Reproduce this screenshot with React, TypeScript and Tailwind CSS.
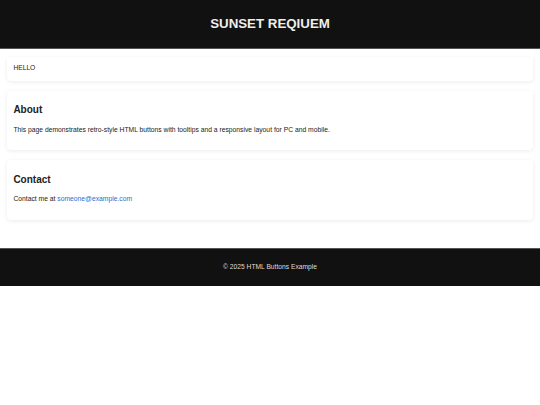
const FONT = "font-['Liberation_Sans',Arial,sans-serif]";

function Card({ children, className = "" }: { children: React.ReactNode; className?: string }) {
  return (
    <section
      className={`rounded-[4px] bg-white px-[6.7px] shadow-[0_1px_4px_rgba(0,0,0,0.08)] ${className}`}
    >
      {children}
    </section>
  );
}

export default function App() {
  return (
    <div className={`${FONT} min-h-[405px] bg-white text-[#222]`}>
      {/* Header */}
      <header className="flex h-[49px] items-center justify-center border-b border-[#555] bg-[#111]">
        <h1 className="text-[13.3px] font-bold leading-none text-[#eee]">SUNSET REQIUEM</h1>
      </header>

      {/* Content */}
      <main className="flex flex-col gap-[10px] px-[6.7px] pb-[28px] pt-[8px]">
        <Card className="flex h-[23.5px] items-center">
          <p className="text-[6.7px] leading-none">HELLO</p>
        </Card>

        <Card className="h-[59px] pt-[13.5px]">
          <h2 className="text-[10px] font-bold leading-[11.5px] text-[#222]">About</h2>
          <p className="mt-[10.3px] text-[6.75px] leading-[7.7px]">
            This page demonstrates retro-style HTML buttons with tooltips and a responsive layout for PC and mobile.
          </p>
        </Card>

        <Card className="h-[60px] pt-[14px]">
          <h2 className="text-[10px] font-bold leading-[11.5px] text-[#222]">Contact</h2>
          <p className="mt-[10.3px] text-[6.75px] leading-[7.7px]">
            Contact me at{" "}
            <a href="#" className="text-[#1f6fcf]">
              someone@example.com
            </a>
          </p>
        </Card>
      </main>

      {/* Footer */}
      <footer className="flex h-[38px] items-center justify-center border-t border-[#555] bg-[#111]">
        <p className="text-[6.7px] leading-none text-[#ddd]">© 2025 HTML Buttons Example</p>
      </footer>
    </div>
  );
}
